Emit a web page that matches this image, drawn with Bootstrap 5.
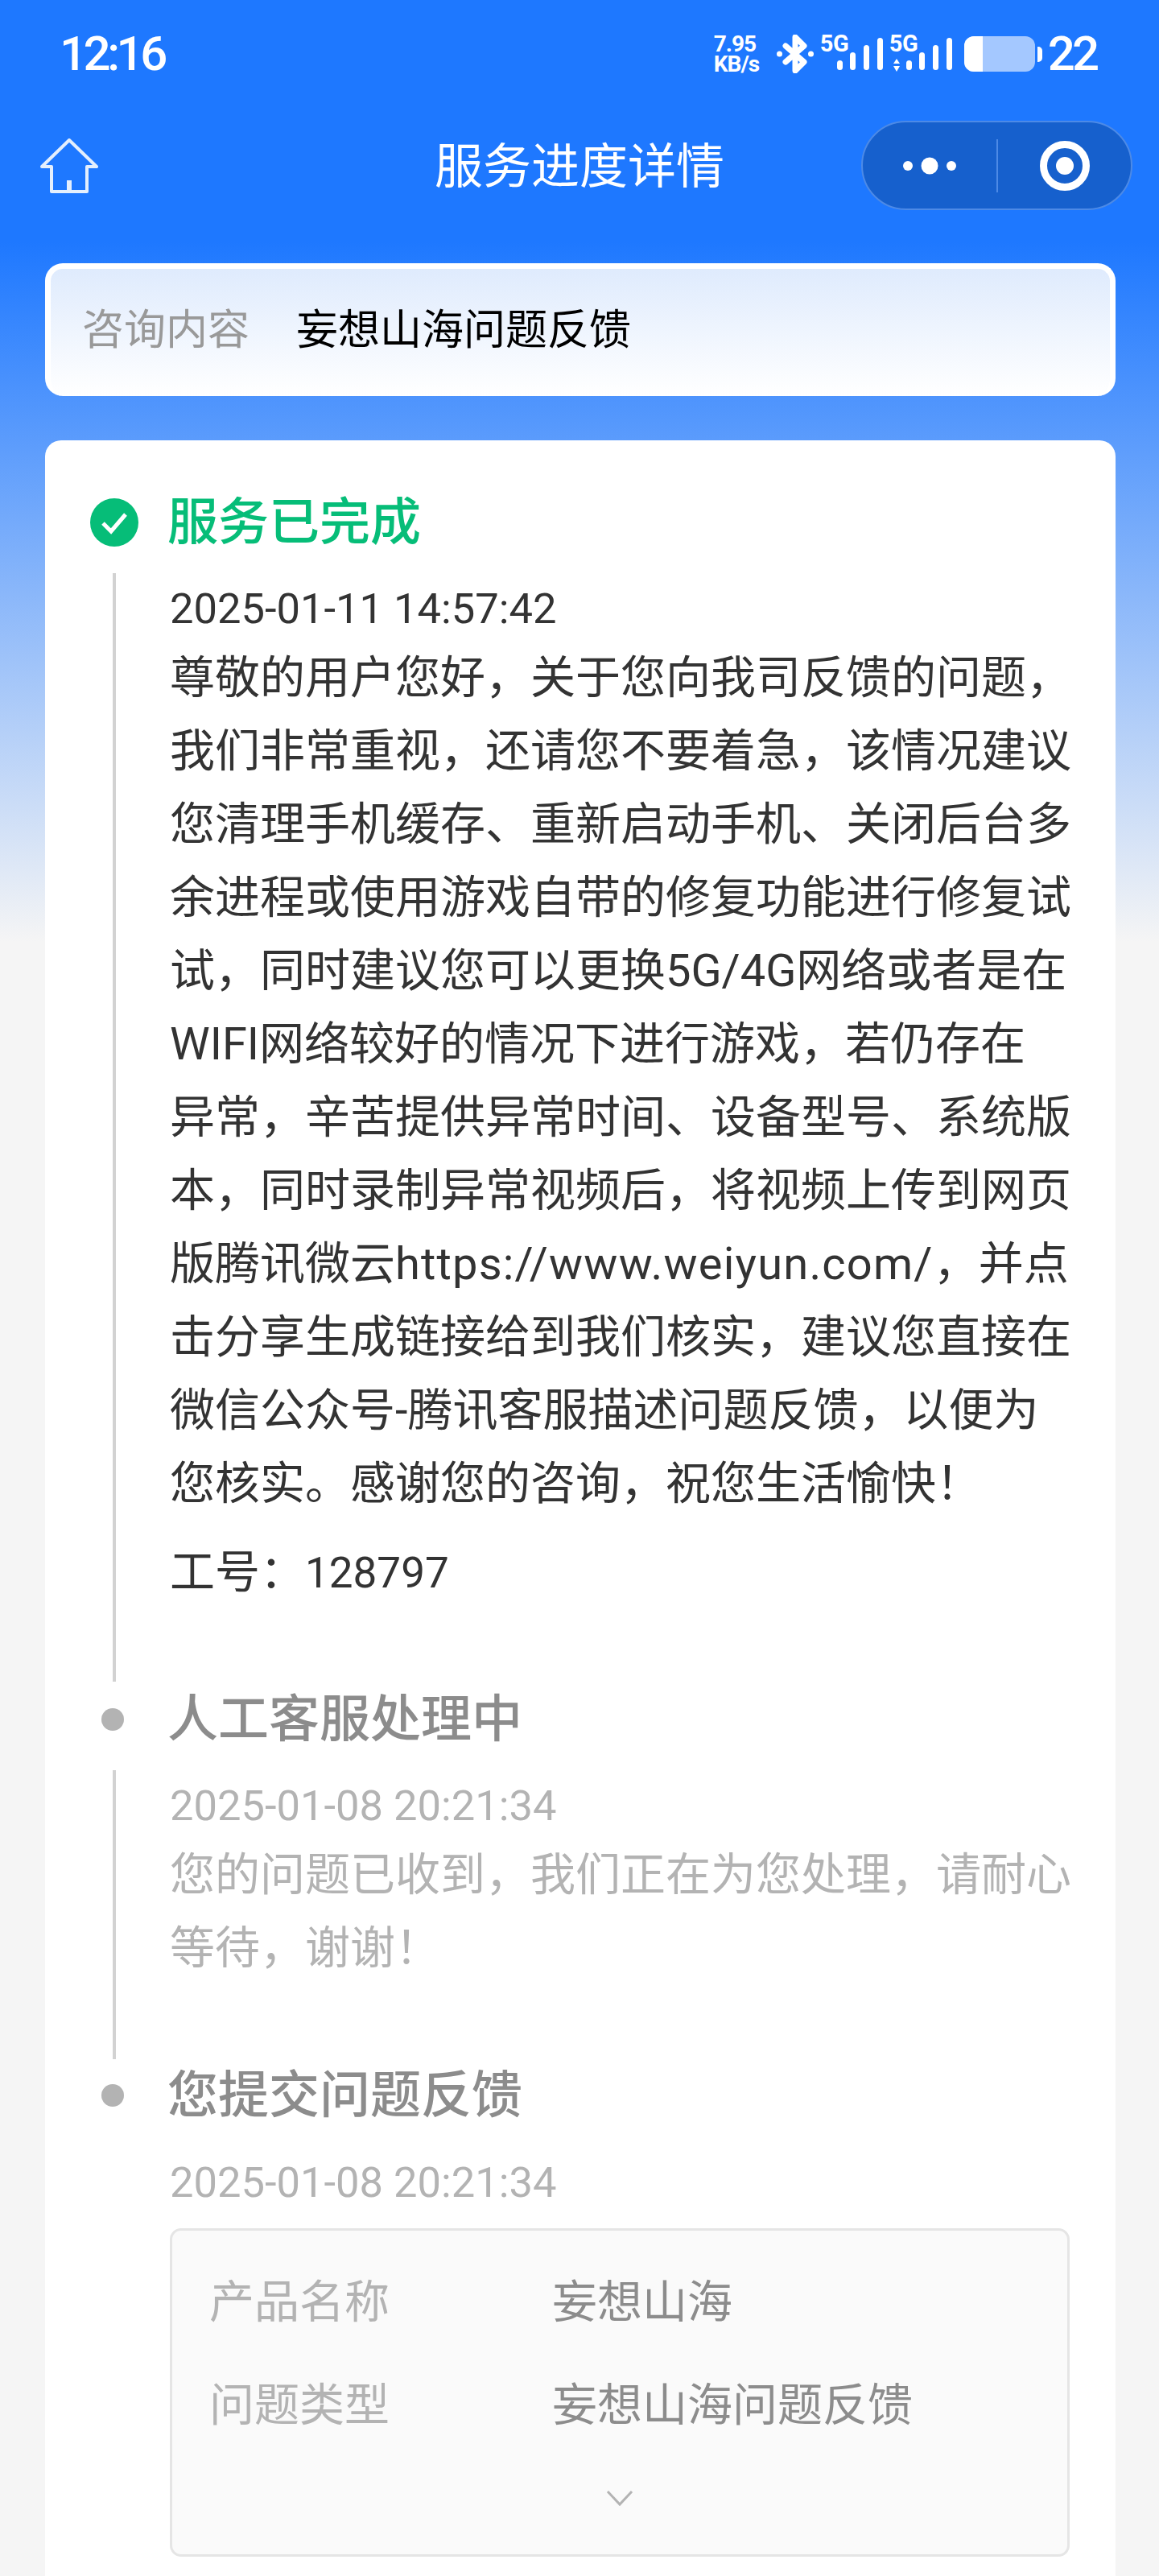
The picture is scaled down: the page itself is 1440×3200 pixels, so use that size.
<!DOCTYPE html>
<html lang="zh-CN">
<head>
  <meta charset="UTF-8" />
  <meta name="viewport" content="width=device-width, initial-scale=1" />
  <title>服务进度详情</title>
  <link href="https://cdn.jsdelivr.net/npm/bootstrap@5.3.0/dist/css/bootstrap.min.css" rel="stylesheet" />
  <style>
    html, body { height: 3200px; overflow: hidden; }
    body {
      font-family: "Roboto", "Noto Sans CJK SC", sans-serif;
      color: #333;
      background: linear-gradient(#1e78ff 0, #1e78ff 300px, #f5f5f5 1170px) no-repeat;
      background-color: #f5f5f5;
    }
    .status-row { height: 130px; padding: 4px 78px 0 74px; color: #fff; }
    .clock { font-size: 60px; font-weight: 500; line-height: 1; letter-spacing: -4.5px; }
    .speed { font-size: 28px; font-weight: 700; line-height: 25px; width: 62px; letter-spacing: -1px; }
    .signal-box { width: 78px; height: 46px; position: relative; }
    .sim-tag { position: absolute; left: 0; top: -3px; font-size: 29px; font-weight: 700; line-height: 26px; letter-spacing: -.5px; }
    .batt-num { font-size: 60px; font-weight: 500; line-height: 1; margin-left: 7px; letter-spacing: -4px; }
    .batt-shell { width: 88px; height: 44px; border-radius: 12px; background: #a4c8ff; overflow: hidden; margin-left: 15px; }
    .batt-fill { width: 23px; height: 100%; background: #fff; }
    .batt-tip { width: 6px; height: 19px; background: #fff; border-radius: 0 5px 5px 0; margin-left: 3px; }
    .nav-row { height: 150px; padding: 0 50px; position: relative; }
    .nav-title { font-size: 60px; color: #fff; line-height: 1; margin-top: 6px; }
    .home-btn { position: absolute; left: 50px; top: 42px; }
    .capsule {
      width: 337px; height: 111px; border-radius: 56px; background: #1660cd;
      border: 2px solid #4d8ae6; position: absolute; right: 33px; top: 20px;
    }
    .capsule-sep { width: 2px; height: 66px; background: #4d8ae6; }
    .topic-box {
      margin: 47px 54px 0 56px; height: 165px; border-radius: 22px; padding: 0 39px 4px;
      border: 7px solid #fff; border-bottom-width: 0;
      background: linear-gradient(#dfebfd, #fff); font-size: 52px; line-height: 1;
    }
    .topic-label { color: #999; width: 266px; }
    .topic-value { color: #000; }
    .main-box { margin: 55px 54px 0 56px; background: #fff; border-radius: 20px 20px 0 0; padding: 64px 55px 0 56px; height: 2653px; }
    .step-head { font-size: 63px; font-weight: 500; line-height: 80px; height: 76px; }
    .step-icon { width: 96px; flex: none; }
    .step-dot { width: 28px; height: 28px; border-radius: 50%; background: #b3b3b3; margin-left: 14px; }
    .done-title { color: #06bd78; }
    .todo-title { color: #8c8c8c; }
    .step-body { margin-left: 28px; padding: 7px 0 0 67px; border-left: 4px solid #d2d2d2; margin-top: 25px; font-size: 56px; line-height: 91px; white-space: nowrap; }
    .step-time { font-size: 52.5px; line-height: 75px; margin-bottom: 3px; }
    .step-text { margin: 0; }
    .staff-no { margin-top: 19px; }
    .num-part { font-size: 53px; }
    .url-part { letter-spacing: 1.2px; }
    .muted-part { color: #b3b3b3; }
    .gap-done { margin-top: 9px; }
    .gap-wait { margin-top: 7px; }
    .submit-time { margin: 33px 0 0 99px; }
    .form-box {
      margin-left: 99px; margin-top: 19px; width: 1118px; height: 408px; background: #fafafa;
      border: 3px solid #e5e5e5; border-radius: 14px; padding: 57px 46px 0; font-size: 56px; line-height: 64px;
    }
    .form-label { color: #b3b3b3; width: 426px; }
    .form-value { color: #8c8c8c; }
    .form-row + .form-row { margin-top: 56px; }
    .form-more { margin-top: 64px; }
  </style>
</head>
<body>
  <div class="status-row d-flex align-items-center justify-content-between">
    <div class="clock">12:16</div>
    <div class="d-flex align-items-center">
      <div class="speed">7.95<br>KB/s</div>
      <svg class="ms-3" width="46" height="48" viewBox="0 0 46 48" fill="none" stroke="#fff" stroke-width="7" stroke-linejoin="round" stroke-linecap="round" style="margin-left:12px">
        <path d="M11 14 L34 34 L23 45 V3 L34 14 L11 34" />
        <circle cx="3.5" cy="24" r="3.5" fill="#fff" stroke="none" />
        <circle cx="42.5" cy="24" r="3.5" fill="#fff" stroke="none" />
      </svg>
      <div class="signal-box ms-2">
        <span class="sim-tag">5G</span>
        <svg class="d-block" width="78" height="46" viewBox="0 0 78 46" fill="#fff">
          <rect x="21" y="31" width="7" height="12" rx="3.5" /><rect x="37" y="21" width="7" height="22" rx="3.5" /><rect x="54" y="12" width="7" height="31" rx="3.5" /><rect x="71" y="3" width="7" height="40" rx="3.5" />
        </svg>
      </div>
      <div class="signal-box ms-2">
        <span class="sim-tag">5G</span>
        <svg class="d-block" width="78" height="46" viewBox="0 0 78 46" fill="#fff">
          <path d="M5 35 L9 29 L13 35 Z M5 38 H13 L9 45 Z" />
          <rect x="21" y="31" width="7" height="12" rx="3.5" /><rect x="37" y="21" width="7" height="22" rx="3.5" /><rect x="54" y="12" width="7" height="31" rx="3.5" /><rect x="71" y="3" width="7" height="40" rx="3.5" />
        </svg>
      </div>
      <div class="batt-shell d-flex"><div class="batt-fill"></div></div>
      <div class="batt-tip"></div>
      <div class="batt-num">22</div>
    </div>
  </div>

  <div class="nav-row d-flex align-items-center justify-content-center">
    <svg class="home-btn" width="72" height="68" viewBox="0 0 72 68" fill="none" stroke="#e4effd" stroke-width="4" stroke-linejoin="round">
      <path d="M36 2 L70 35 H58 V66 H14 V35 H2 Z" />
      <path d="M36 66 V52" stroke-width="6" />
    </svg>
    <div class="nav-title">服务进度详情</div>
    <div class="capsule d-flex align-items-center">
      <div class="d-flex align-items-center justify-content-center" style="width:166px">
        <svg width="66" height="22" viewBox="0 0 66 22" fill="#fff"><circle cx="6" cy="11" r="6" /><circle cx="33" cy="11" r="10.5" /><circle cx="60" cy="11" r="6" /></svg>
      </div>
      <div class="capsule-sep"></div>
      <div class="d-flex align-items-center justify-content-center flex-fill">
        <svg width="62" height="62" viewBox="0 0 62 62" fill="none"><circle cx="31" cy="31" r="26.5" stroke="#fff" stroke-width="9" /><circle cx="31" cy="31" r="11" fill="#fff" /></svg>
      </div>
    </div>
  </div>

  <div class="topic-box d-flex align-items-center">
    <div class="topic-label">咨询内容</div>
    <div class="topic-value">妄想山海问题反馈</div>
  </div>

  <div class="main-box">
    <div class="step-head d-flex align-items-center">
      <div class="step-icon">
        <svg class="d-block" width="60" height="60" viewBox="0 0 60 60"><circle cx="30" cy="30" r="30" fill="#06bd78" /><path d="M16 31 L26 41 L44 20" fill="none" stroke="#fff" stroke-width="5" /></svg>
      </div>
      <div class="done-title">服务已完成</div>
    </div>
    <div class="step-body" style="height:1377px">
      <div class="step-time">2025-01-11 14:57:42</div>
      <p class="step-text">尊敬的用户您好，关于您向我司反馈的问题，<br>我们非常重视，还请您不要着急，该情况建议<br>您清理手机缓存、重新启动手机、关闭后台多<br>余进程或使用游戏自带的修复功能进行修复试<br>试，同时建议您可以更换5G/4G网络或者是在<br>WIFI网络较好的情况下进行游戏，若仍存在<br>异常，辛苦提供异常时间、设备型号、系统版<br>本，同时录制异常视频后，将视频上传到网页<br>版腾讯微云<span class="url-part">https://www.weiyun.com/</span>，并点<br>击分享生成链接给到我们核实，建议您直接在<br>微信公众号-腾讯客服描述问题反馈，以便为<br>您核实。感谢您的咨询，祝您生活愉快！</p>
      <p class="step-text staff-no">工号：<span class="num-part">128797</span></p>
    </div>
    <div class="step-head d-flex align-items-center gap-done">
      <div class="step-icon"><div class="step-dot"></div></div>
      <div class="todo-title">人工客服处理中</div>
    </div>
    <div class="step-body muted-part" style="height:359px">
      <div class="step-time">2025-01-08 20:21:34</div>
      <p class="step-text">您的问题已收到，我们正在为您处理，请耐心<br>等待，谢谢！</p>
    </div>
    <div class="step-head d-flex align-items-center gap-wait">
      <div class="step-icon"><div class="step-dot"></div></div>
      <div class="todo-title">您提交问题反馈</div>
    </div>
    <div class="step-time muted-part submit-time">2025-01-08 20:21:34</div>
    <div class="form-box">
      <div class="d-flex form-row"><div class="form-label">产品名称</div><div class="form-value">妄想山海</div></div>
      <div class="d-flex form-row"><div class="form-label">问题类型</div><div class="form-value">妄想山海问题反馈</div></div>
      <div class="d-flex justify-content-center form-more">
        <svg width="34" height="22" viewBox="0 0 34 22" fill="none" stroke="#b3b3b3" stroke-width="3"><path d="M2 3 L17 19 L32 3" /></svg>
      </div>
    </div>
  </div>

  <script src="https://cdn.jsdelivr.net/npm/bootstrap@5.3.0/dist/js/bootstrap.bundle.min.js"></script>
</body>
</html>
